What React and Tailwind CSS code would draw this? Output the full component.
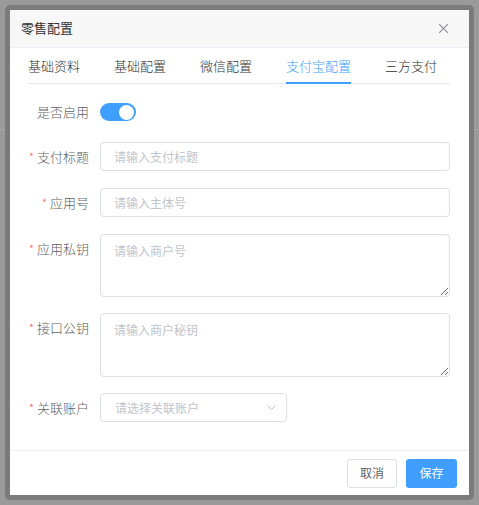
import { useState } from 'react'

const tabs = ['基础资料', '基础配置', '微信配置', '支付宝配置', '三方支付']

function Label({ text, required = true }) {
  return (
    <div className="w-[90px] shrink-0 pr-[11px] h-[29px] flex items-center justify-end text-[13px] font-light text-[#606266]">
      {required && <span className="text-[#f56c6c] mr-[3px] text-[12px]">*</span>}
      {text}
    </div>
  )
}

export default function App() {
  const [enabled, setEnabled] = useState(true)
  const [active, setActive] = useState(3)

  return (
    <div
      className="relative w-[479px] h-[505px] bg-[#9a9a9a] p-[5px] overflow-hidden"
      style={{ fontFamily: '"Noto Sans CJK SC", "Noto Sans", sans-serif' }}
    >
      <div className="absolute left-0 right-0 top-[129px] h-px bg-[#a6a6a6]" />
      <div className="relative h-full bg-[#7b7b7b] rounded-[5px] p-[5px]">
        <div className="h-full bg-white flex flex-col">
          {/* header */}
          <div className="h-[38px] shrink-0 bg-[#f7f7f7] border-b border-[#ebeef5] flex items-center justify-between pl-[11px] pr-[20px]">
            <span className="text-[13px] text-[#303133] -mt-[2px]">零售配置</span>
            <svg width="11" height="11" viewBox="0 0 10 10" className="text-[#909399]">
              <path d="M1 1L9 9M9 1L1 9" stroke="currentColor" strokeWidth="1.1" />
            </svg>
          </div>

          {/* tabs */}
          <div className="mx-[18px] mr-[19px] h-[36px] shrink-0 border-b border-[#e4e7ed] flex gap-[34px]">
            {tabs.map((t, i) => (
              <button
                key={t}
                onClick={() => setActive(i)}
                className={
                  'relative h-full text-[13px] font-light leading-none ' +
                  (i === active ? 'text-[#409eff]' : 'text-[#303133]')
                }
              >
                {t}
                {i === active && <span className="absolute left-0 right-0 -bottom-px h-[2px] bg-[#409eff]" />}
              </button>
            ))}
          </div>

          {/* form */}
          <div className="flex-1 flex flex-col pr-[19px] pt-[13px]">
            <div className="flex items-center h-[30px]">
              <Label text="是否启用" required={false} />
              <button
                onClick={() => setEnabled(!enabled)}
                className={
                  'w-[36px] h-[18px] rounded-full flex items-center px-[2px] ' +
                  (enabled ? 'bg-[#409eff] justify-end' : 'bg-[#dcdfe6] justify-start')
                }
              >
                <span className="w-[15px] h-[15px] rounded-full bg-white" />
              </button>
            </div>

            <div className="flex mt-[15px]">
              <Label text="支付标题" />
              <input
                placeholder="请输入支付标题"
                className="flex-1 h-[29px] border border-[#dcdfe6] rounded-[4px] px-[13px] text-[12px] text-[#606266] placeholder:text-[#c0c4cc] outline-none"
              />
            </div>

            <div className="flex mt-[17px]">
              <Label text="应用号" />
              <input
                placeholder="请输入主体号"
                className="flex-1 h-[29px] border border-[#dcdfe6] rounded-[4px] px-[13px] text-[12px] text-[#606266] placeholder:text-[#c0c4cc] outline-none"
              />
            </div>

            <div className="flex mt-[17px]">
              <Label text="应用私钥" />
              <textarea
                placeholder="请输入商户号"
                className="flex-1 h-[63px] border border-[#dcdfe6] rounded-[4px] px-[13px] py-[7px] leading-[18px] text-[12px] text-[#606266] placeholder:text-[#c0c4cc] outline-none"
              />
            </div>

            <div className="flex mt-[16px]">
              <Label text="接口公钥" />
              <textarea
                placeholder="请输入商户秘钥"
                className="flex-1 h-[64px] border border-[#dcdfe6] rounded-[4px] px-[13px] py-[7px] leading-[18px] text-[12px] text-[#606266] placeholder:text-[#c0c4cc] outline-none"
              />
            </div>

            <div className="flex mt-[16px]">
              <Label text="关联账户" />
              <div className="w-[187px] h-[29px] border border-[#dcdfe6] rounded-[4px] pl-[14px] pr-[10px] flex items-center justify-between">
                <span className="text-[12px] text-[#c0c4cc]">请选择关联账户</span>
                <svg width="9" height="5" viewBox="0 0 9 5">
                  <path d="M0.5 0.5L4.5 4.5L8.5 0.5" fill="none" stroke="#c0c4cc" strokeWidth="1" />
                </svg>
              </div>
            </div>
          </div>

          {/* footer */}
          <div className="h-[45px] shrink-0 border-t border-[#ebeef5] flex items-center justify-end gap-[9px] pr-[12px]">
            <button className="w-[50px] h-[29px] border border-[#dcdfe6] rounded-[3px] bg-white text-[12px] text-[#606266]">
              取消
            </button>
            <button className="w-[51px] h-[29px] rounded-[3px] bg-[#409eff] text-[12px] text-white">
              保存
            </button>
          </div>
        </div>
      </div>
    </div>
  )
}
